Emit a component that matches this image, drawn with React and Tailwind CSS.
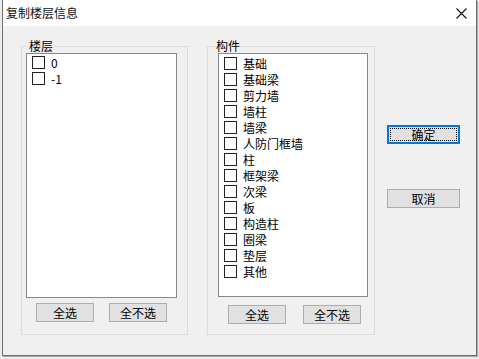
import React from "react";

const font = { fontFamily: '"Noto Sans CJK SC", "Noto Sans", sans-serif' };

function Check({ label }) {
  return (
    <div className="flex items-center h-[13px] gap-[6px]">
      <div className="w-[13px] h-[13px] border border-[#222222] bg-white shrink-0" />
      <span className="text-[12px] leading-[13px] text-black whitespace-nowrap">{label}</span>
    </div>
  );
}

function Btn({ children, className = "" }) {
  return (
    <div
      className={
        "w-[58px] h-[19px] bg-[#e1e1e1] border border-[#adadad] flex items-center justify-center text-[12px] leading-[12px] text-black " +
        className
      }
    >
      {children}
    </div>
  );
}

export default function App() {
  const floors = ["0", "-1"];
  const parts = [
    "基础",
    "基础梁",
    "剪力墙",
    "墙柱",
    "墙梁",
    "人防门框墙",
    "柱",
    "框架梁",
    "次梁",
    "板",
    "构造柱",
    "圈梁",
    "垫层",
    "其他",
  ];
  return (
    <div className="w-[479px] h-[359px] bg-[#ececec] overflow-hidden" style={font}>
      <div className="ml-[2px] w-[475px] h-[356px] border-x border-b border-[#6f6f6f] flex flex-col shadow-[1px_1px_0_#a8a8a8]">
        <div className="h-[26px] bg-white flex items-center justify-between pl-[3px] pr-[9px]">
          <span className="text-[12px] leading-[14px] text-[#111111]">复制楼层信息</span>
          <svg width="11" height="11" viewBox="0 0 11 11">
            <path d="M0.5 0.5 L10.5 10.5 M10.5 0.5 L0.5 10.5" stroke="#111" strokeWidth="1.1" fill="none" />
          </svg>
        </div>
        <div className="flex-1 bg-[#f0f0f0] flex items-start pl-[18px] pt-[13px]">
          <fieldset className="w-[167px] h-[296px] border border-[#dcdcdc] pl-[4px]">
            <legend className="ml-[2px] px-[1px] text-[12px] leading-[14px] text-black">楼层</legend>
            <div className="w-[151px] h-[245px] bg-white border border-[#828790] pl-[5px] pt-[2px] flex flex-col gap-[3px]">
              {floors.map((f) => (
                <Check key={f} label={f} />
              ))}
            </div>
            <div className="flex mt-[5px]">
              <Btn className="ml-[10px]">全选</Btn>
              <Btn className="ml-[15px]">全不选</Btn>
            </div>
          </fieldset>
          <fieldset className="ml-[19px] w-[168px] h-[296px] border border-[#dcdcdc] pl-[10px]">
            <legend className="ml-[-3px] px-[1px] text-[12px] leading-[14px] text-black">构件</legend>
            <div className="w-[150px] h-[244px] bg-white border border-[#828790] pl-[5px] pt-[3px] flex flex-col gap-[3px]">
              {parts.map((p) => (
                <Check key={p} label={p} />
              ))}
            </div>
            <div className="flex mt-[8px]">
              <Btn className="ml-[10px]">全选</Btn>
              <Btn className="ml-[17px]">全不选</Btn>
            </div>
          </fieldset>
          <div className="ml-[12px] pt-[86px] flex flex-col">
            <div className="w-[73px] h-[19px] border-2 border-[#0078d7] bg-[#e1e1e1] p-[1px]">
              <div className="w-full h-full border border-dotted border-black flex items-center justify-center text-[12px] leading-[12px] text-black">
                确定
              </div>
            </div>
            <div className="mt-[45px] w-[73px] h-[19px] bg-[#e1e1e1] border border-[#adadad] flex items-center justify-center text-[12px] leading-[12px] text-black">
              取消
            </div>
          </div>
        </div>
      </div>
    </div>
  );
}
